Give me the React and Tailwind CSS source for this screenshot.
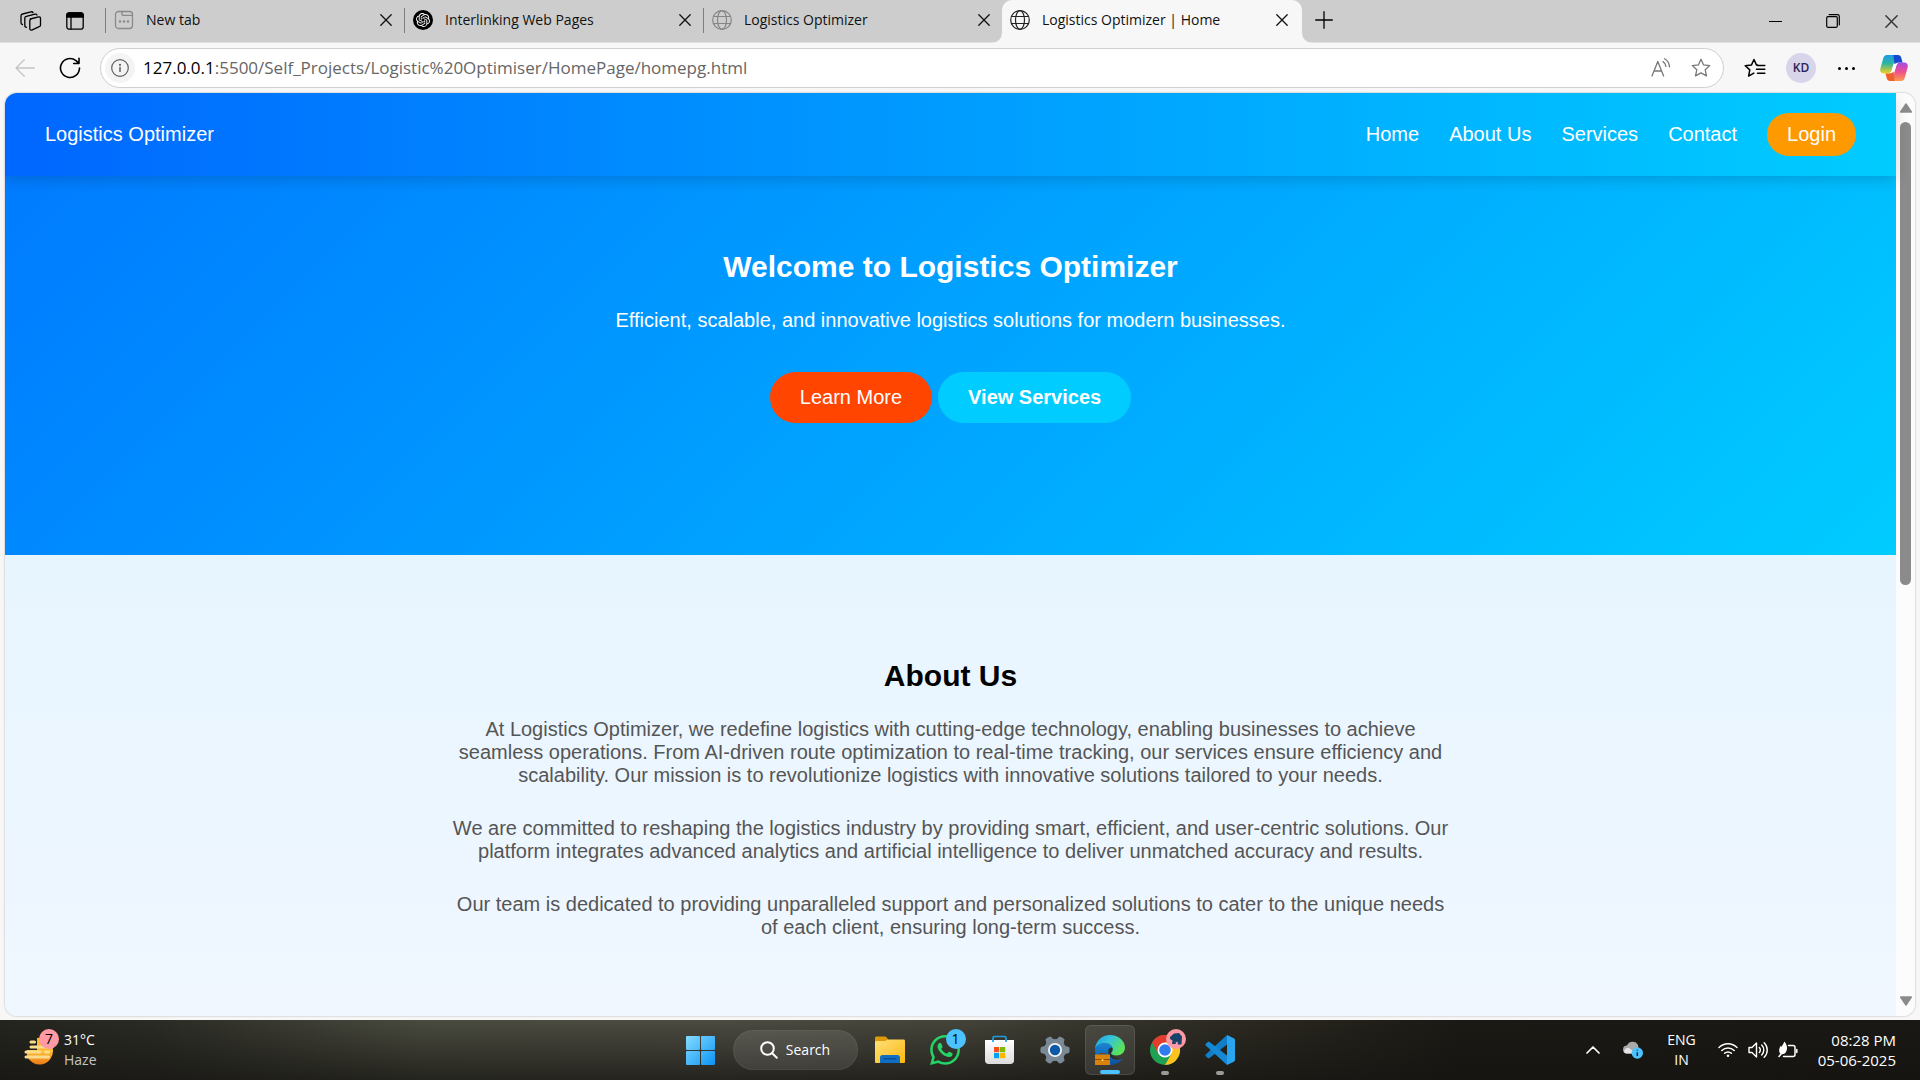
import React from "react";
import { SiOpenai, SiWhatsapp } from "react-icons/si";

const stroke = { fill: "none", stroke: "currentColor", strokeLinecap: "round", strokeLinejoin: "round" };

function Globe({ className }) {
  return (
    <svg viewBox="0 0 20 20" className={className} {...stroke} strokeWidth="1.2" aria-hidden="true">
      <circle cx="10" cy="10" r="9.3" />
      <ellipse cx="10" cy="10" rx="4.5" ry="9.3" />
      <path d="M1.6 6.5h16.8M1.6 13.5h16.8" />
    </svg>
  );
}

function NewTabIcon() {
  return (
    <svg viewBox="0 0 20 20" className="size-5 text-[#8a8a8a]" {...stroke} strokeWidth="1.3" aria-hidden="true">
      <rect x="1.5" y="1.5" width="17" height="17" rx="3" />
      <path d="M8 1.5v2.7c0 .7.5 1.2 1.2 1.2h9.3" />
      <g fill="currentColor" stroke="none">
        <circle cx="6" cy="11.5" r="1.2" />
        <circle cx="10" cy="11.5" r="1.2" />
        <circle cx="14" cy="11.5" r="1.2" />
      </g>
    </svg>
  );
}

function CloseIcon({ className = "size-3" }) {
  return (
    <svg viewBox="0 0 12 12" className={className} {...stroke} strokeWidth="1.3" aria-hidden="true">
      <path d="M.8.8l10.4 10.4M11.2.8L.8 11.2" />
    </svg>
  );
}

function Tab({ icon, title, active, divided }) {
  return (
    <div
      className={
        active
          ? "relative flex h-[43px] w-[300px] items-center rounded-t-[10px] bg-[#f7f7f7] pr-2.5 pb-1 pl-2"
          : "flex h-[42px] w-[299px] items-center pr-2 pb-0.5"
      }
    >
      {active && (
        <>
          <svg viewBox="0 0 10 10" className="absolute bottom-0 -left-2.5 size-2.5" fill="#f7f7f7" aria-hidden="true">
            <path d="M10 0v10H0A10 10 0 0 0 10 0z" />
          </svg>
          <svg viewBox="0 0 10 10" className="absolute -right-2.5 bottom-0 size-2.5" fill="#f7f7f7" aria-hidden="true">
            <path d="M0 0v10h10A10 10 0 0 1 0 0z" />
          </svg>
        </>
      )}
      {divided && <span className="mr-2 h-[25px] w-px bg-[#7d7d7d]" />}
      <button role="tab" aria-selected={!!active} className="flex flex-1 items-center gap-3 text-left text-sm text-[#111]">
        {icon}
        <span className="whitespace-nowrap">{title}</span>
      </button>
      <button aria-label={"Close " + title} className="flex size-5 items-center justify-center text-[#111]">
        <CloseIcon />
      </button>
    </div>
  );
}

function TabBar() {
  return (
    <div className="flex h-[42px] items-center bg-[#cdcdcd]">
      <button aria-label="Workspaces" className="ml-5 flex size-[22px] items-center justify-center">
        <svg viewBox="0 0 22 22" className="size-[22px]" {...stroke} strokeWidth="1.3" aria-hidden="true">
          <path d="M10.3 9l8.3-2.1c1-.2 1.9.4 1.9 1.4v6.6c0 .9-.5 1.5-1.3 1.8l-6.9 3.2c-1.3.6-2.5 0-2.5-1.3v-7.7c0-1 .5-1.7 1.3-1.9z" />
          <path d="M6.5 17.3c-1.2 0-1.7-.8-1.7-1.7V8.3c0-1 .5-1.8 1.5-2l8.7-2.1c.9-.2 1.6.1 2 .8" />
          <path d="M2.4 14.5C1.500 14.3 1 13.7 1 12.7V6c0-1 .5-1.8 1.5-2l8.5-2.2c.9-.2 1.6.1 2 .8" />
        </svg>
      </button>
      <button aria-label="Tab actions" className="ml-6 flex size-[18px] items-center justify-center">
        <svg viewBox="0 0 18 18" className="size-[18px]" {...stroke} strokeWidth="1.3" aria-hidden="true">
          <rect x=".8" y=".8" width="16.4" height="16.4" rx="2.5" />
          <path d="M.8 5V3.3A2.5 2.5 0 0 1 3.3.8h11.4a2.5 2.5 0 0 1 2.5 2.5V5z" fill="currentColor" />
          <path d="M5 5v12" />
        </svg>
      </button>
      <div role="tablist" className="ml-[21px] flex items-end self-stretch">
        <Tab divided title="New tab" icon={<NewTabIcon />} />
        <Tab
          divided
          title="Interlinking Web Pages"
          icon={
            <span className="flex size-5 items-center justify-center rounded-full bg-black text-white">
              <SiOpenai className="size-[14px]" />
            </span>
          }
        />
        <Tab divided title="Logistics Optimizer" icon={<Globe className="size-5 text-[#858585]" />} />
        <div className="-mb-px">
          <Tab active title="Logistics Optimizer | Home" icon={<Globe className="size-5 text-[#222]" />} />
        </div>
      </div>
      <button aria-label="New tab" className="ml-3 flex size-5 items-center justify-center pb-0.5">
        <svg viewBox="0 0 18 18" className="size-[18px]" {...stroke} strokeWidth="1.3" aria-hidden="true">
          <path d="M9 .7v16.6M.7 9h16.6" />
        </svg>
      </button>
      <div className="ml-auto flex self-stretch">
        <button aria-label="Minimize" className="flex w-[58px] items-center justify-center">
          <svg viewBox="0 0 13 13" className="size-[13px]" aria-hidden="true">
            <path d="M0 6.5h13" stroke="#000" />
          </svg>
        </button>
        <button aria-label="Restore" className="flex w-[58px] items-center justify-center">
          <svg viewBox="0 0 14 14" className="size-[14px]" {...stroke} strokeWidth="1.2" aria-hidden="true">
            <rect x=".7" y="2.7" width="10.6" height="10.6" rx="1.2" />
            <path d="M3.2.7h8.3c1 0 1.8.8 1.8 1.8v8.3" />
          </svg>
        </button>
        <button aria-label="Close window" className="flex w-[58px] items-center justify-center text-[#333]">
          <CloseIcon className="size-[13px]" />
        </button>
      </div>
    </div>
  );
}

function CopilotIcon() {
  return (
    <svg viewBox="0 0 28 26" className="h-[26px] w-7" aria-hidden="true">
      <defs>
        <linearGradient id="cpA" x1="0" y1="0" x2="0" y2="1">
          <stop offset="0" stopColor="#1e9bea" />
          <stop offset=".45" stopColor="#2bb5a0" />
          <stop offset="1" stopColor="#f5d21c" />
        </linearGradient>
        <linearGradient id="cpB" x1="0" y1="0" x2="0" y2="1">
          <stop offset="0" stopColor="#a44be8" />
          <stop offset=".5" stopColor="#f04f8c" />
          <stop offset="1" stopColor="#fd9a4c" />
        </linearGradient>
      </defs>
      <path d="M7 0h10.500c-1.600.6-2 2-2.600 4l-3 10.500c-.7 2.600-1.600 4-4 4H4c-3 0-4.400-2-3.600-5L3 4C3.700 1.400 4.800 0 7 0z" fill="url(#cpA)" />
      <path d="M21 26H10.500c1.600-.6 2-2 2.600-4l3-10.500c.7-2.600 1.600-4 4-4H24c3 0 4.400 2 3.600 5L25 22c-.7 2.600-1.800 4-4 4z" fill="url(#cpB)" />
      <path d="M13.500 0h4.500c1.700 0 2.700 1 3.200 2.500L22.500 7.500H19c-2.500 0-3.500 1-4.500 3.500z" fill="#1749cf" />
      <path d="M14.500 26H10c-1.700 0-2.700-1-3.200-2.500L5.500 18.500H9c2.500 0 3.500-1 4.500-3.500z" fill="#f0602a" />
      <path d="M15.500 8.500h2.300c-1.300 1-1.800 2.500-2.300 4.300-.8 3-1.500 4.700-4.500 5.200H9.500c1.500-.7 2.200-2 2.800-4.200.9-3.200 1.400-5 3.200-5.300z" fill="#fff" />
    </svg>
  );
}

const starPath = "M10 1.300l2.600 5.600 6.200.7-4.600 4.200 1.300 6.100L10 14.900l-5.500 3 1.300-6.100L1.200 7.600l6.200-.7z";

function Toolbar() {
  return (
    <div className="flex h-[51px] items-center border-t border-[#e2e2e2] bg-[#f7f7f7]">
      <button aria-label="Back" disabled className="ml-[15px] text-[#c4c4c4]">
        <svg viewBox="0 0 20 18" className="h-[18px] w-5" {...stroke} strokeWidth="1.3" aria-hidden="true">
          <path d="M9.300.8L1 9l8.300 8.200M1 9h18.300" />
        </svg>
      </button>
      <button aria-label="Refresh" className="ml-6">
        <svg viewBox="0 0 22 22" className="size-[22px]" {...stroke} strokeWidth="1.6" aria-hidden="true">
          <path d="M20.500 11A9.500 9.500 0 1 1 17 3.600l2.800 2.700M20 1.200v5.300h-5.300" />
        </svg>
      </button>
      <div className="ml-[19px] flex h-10 flex-1 items-center rounded-full border border-[#cfcfcf] bg-white pr-3 pl-1">
        <button aria-label="Site information" className="flex size-[30px] items-center justify-center rounded-full bg-[#f4f4f4] text-[#5f5f5f]">
          <svg viewBox="0 0 18 18" className="size-[18px]" {...stroke} strokeWidth="1.2" aria-hidden="true">
            <circle cx="9" cy="9" r="8.3" />
            <path d="M9 8.500v4" strokeWidth="1.5" />
            <circle cx="9" cy="5.8" r=".5" fill="currentColor" />
          </svg>
        </button>
        <div role="textbox" aria-label="Address" className="ml-2 flex-1 text-[17px] whitespace-nowrap text-[#666]">
          <span className="text-black">127.0.0.1</span>:5500/Self_Projects/Logistic%20Optimiser/HomePage/homepg.html
        </div>
        <button aria-label="Read aloud" className="text-[#777]">
          <svg viewBox="0 0 20 20" className="size-5" {...stroke} strokeWidth="1.3" aria-hidden="true">
            <path d="M1 18L6.800 3.500 12.600 18M3 13h7.600M12 3.600c1.600 1 2.700 2.700 2.900 4.800M13.600.8c2.700 1.500 4.600 4.400 4.900 8" />
          </svg>
        </button>
        <button aria-label="Add to favorites" className="ml-5 text-[#777]">
          <svg viewBox="0 0 20 20" className="size-5" {...stroke} strokeWidth="1.3" aria-hidden="true">
            <path d={starPath} />
          </svg>
        </button>
      </div>
      <button aria-label="Favorites" className="ml-5">
        <svg viewBox="0 0 22 20" className="h-5 w-[22px]" {...stroke} strokeWidth="1.5" aria-hidden="true">
          <path d="M13.600 6.900h-1.200L10 1.500 7.500 6.900l-6.300.8 4.600 4.200-1.200 6.200 5.200-3M13.500 7.500h7.300M12.500 11.300h8.300M13.500 15.200h7.300" />
        </svg>
      </button>
      <button aria-label="Profile" className="ml-5 flex size-[30px] items-center justify-center rounded-full bg-[#d8d4ea] text-xs font-semibold text-[#2b2357]">
        KD
      </button>
      <button aria-label="Settings and more" className="ml-5 flex w-5 items-center justify-center gap-1">
        <span className="size-[3px] rounded-full bg-black" />
        <span className="size-[3px] rounded-full bg-black" />
        <span className="size-[3px] rounded-full bg-black" />
      </button>
      <button aria-label="Copilot" className="mr-3 ml-6">
        <CopilotIcon />
      </button>
    </div>
  );
}

const paragraphs = [
  "At Logistics Optimizer, we redefine logistics with cutting-edge technology, enabling businesses to achieve seamless operations. From AI-driven route optimization to real-time tracking, our services ensure efficiency and scalability. Our mission is to revolutionize logistics with innovative solutions tailored to your needs.",
  "We are committed to reshaping the logistics industry by providing smart, efficient, and user-centric solutions. Our platform integrates advanced analytics and artificial intelligence to deliver unmatched accuracy and results.",
  "Our team is dedicated to providing unparalleled support and personalized solutions to cater to the unique needs of each client, ensuring long-term success.",
];

function Website() {
  return (
    <div className="flex flex-1 flex-col font-['Liberation_Sans',Arial,sans-serif] text-xl leading-[23px]">
      <header className="relative flex items-center justify-between bg-linear-to-r from-[#0066ff] to-[#00ccff] px-10 py-5 text-white shadow-[0_5px_12px_rgba(0,0,0,0.14)]">
        <a href="#home">Logistics Optimizer</a>
        <nav className="flex items-center gap-[30px]">
          <a href="#home">Home</a>
          <a href="#about">About Us</a>
          <a href="#services">Services</a>
          <a href="#contact">Contact</a>
          <a href="#login" className="rounded-full bg-[#ff9900] px-5 py-2.5">Login</a>
        </nav>
      </header>
      <section id="home" className="flex flex-col items-center bg-[linear-gradient(135deg,#007bff_0%,#00ccff_100%)] pt-[74px] pb-[132px] text-white">
        <h1 className="text-3xl leading-[34px] font-bold">Welcome to Logistics Optimizer</h1>
        <p className="mt-[25px]">Efficient, scalable, and innovative logistics solutions for modern businesses.</p>
        <div className="mt-10 flex gap-1.5">
          <button className="rounded-full bg-[#ff4500] px-[30px] py-[14px]">Learn More</button>
          <button className="rounded-full bg-[#00ccff] px-[30px] py-[14px] font-bold">View Services</button>
        </div>
      </section>
      <section id="about" className="flex flex-1 flex-col items-center bg-linear-to-b from-[#e7f5ff] to-[#f0f7ff] pt-[104px]">
        <h2 className="text-3xl leading-[34px] font-bold text-black">About Us</h2>
        <div className="mt-[25px] flex max-w-[1000px] flex-col gap-[30px] text-center text-[#555]">
          {paragraphs.map((p) => (
            <p key={p}>{p}</p>
          ))}
        </div>
      </section>
    </div>
  );
}

function ScrollArrow({ className }) {
  return (
    <svg viewBox="0 0 12 10" className={className} fill="currentColor" aria-hidden="true">
      <path d="M5.200.8a1 1 0 0 1 1.600 0l5 7.500c.5.800.1 1.500-.7 1.500H.9C.1 9.800-.3 9.100.2 8.300z" />
    </svg>
  );
}

function Scrollbar() {
  return (
    <div className="flex w-[19px] flex-col items-center bg-[#fcfcfc] py-2.5 text-[#8b8b8b]" aria-hidden="true">
      <ScrollArrow className="h-2.5 w-3" />
      <div className="flex w-full flex-1 flex-col items-center pt-[9px]">
        <div className="h-[53%] w-[11px] rounded-full bg-[#8b8b8b]" />
      </div>
      <ScrollArrow className="h-2.5 w-3 rotate-180" />
    </div>
  );
}

function WeatherIcon() {
  return (
    <svg viewBox="0 0 30 30" className="size-[30px]" aria-hidden="true">
      <defs>
        <linearGradient id="sun" x1="0" y1="0" x2="0" y2="1">
          <stop offset="0" stopColor="#ffc53a" />
          <stop offset="1" stopColor="#ec7a17" />
        </linearGradient>
      </defs>
      <path d="M3 15h26A13.500 13.500 0 0 1 3 21z" fill="url(#sun)" />
      <path d="M13 3a13.500 13.500 0 0 1 16 12H13z" fill="#ffb52e" />
      <g stroke="#f9dc8c" strokeWidth="3" strokeLinecap="round">
        <path d="M7 7h3.500M7 12h21M2 17h14M21.500 17h3M2 22h22.500" />
      </g>
    </svg>
  );
}

function StartIcon() {
  return (
    <svg viewBox="0 0 29 29" className="size-[29px]" aria-hidden="true">
      <defs>
        <linearGradient id="win" gradientUnits="userSpaceOnUse" x1="0" y1="0" x2="29" y2="29">
          <stop offset="0" stopColor="#86dcff" />
          <stop offset="1" stopColor="#0a94f5" />
        </linearGradient>
      </defs>
      <g fill="url(#win)">
        <rect width="14" height="14" rx="1" />
        <rect x="15" width="14" height="14" rx="1" />
        <rect y="15" width="14" height="14" rx="1" />
        <rect x="15" y="15" width="14" height="14" rx="1" />
      </g>
    </svg>
  );
}

function FolderIcon() {
  return (
    <svg viewBox="0 0 30 28" className="h-7 w-[30px]" aria-hidden="true">
      <defs>
        <linearGradient id="fold" x1="0" y1="0" x2="1" y2="1">
          <stop offset="0" stopColor="#ffe07a" />
          <stop offset="1" stopColor="#fbb90f" />
        </linearGradient>
      </defs>
      <path d="M0 2c0-1 .7-1.500 1.500-1.500h8.300c.7 0 1.200.3 1.700.8L13.500 4v8H0z" fill="#dd9a08" />
      <path d="M0 6.500c0-1 .6-1.500 1.500-1.500H10l3-1.500h15.500c1 0 1.500.6 1.500 1.500v21c0 .7-.6 1-1.300 1H1.300C.6 27 0 26.700 0 26z" fill="url(#fold)" />
      <path d="M5 27v-5.500c0-1.500 1-2.500 2.500-2.500h15c1.500 0 2.500 1 2.500 2.500V27z" fill="#0f6fc4" />
      <path d="M8.500 22.800h13" stroke="#0a3f78" strokeWidth="1" />
    </svg>
  );
}

function StoreIcon() {
  return (
    <svg viewBox="0 0 29 30" className="h-[30px] w-[29px]" aria-hidden="true">
      <defs>
        <linearGradient id="bag" x1="0" y1="0" x2="0" y2="1">
          <stop offset="0" stopColor="#ffffff" />
          <stop offset="1" stopColor="#dcdcdc" />
        </linearGradient>
      </defs>
      <path d="M0 5h29v20.500c0 2-1.500 3.500-3.500 3.500h-22C1.500 29 0 27.500 0 25.500z" fill="url(#bag)" />
      <path d="M8 7V3c0-1 .5-1.500 1.500-1.500h10c1 0 1.500.5 1.500 1.500v4" fill="none" stroke="#1ba0e0" strokeWidth="1.7" />
      <rect x="9" y="12" width="5.2" height="5.2" fill="#f25022" />
      <rect x="15" y="12" width="5.2" height="5.2" fill="#7fba00" />
      <rect x="9" y="18" width="5.2" height="5.2" fill="#00a4ef" />
      <rect x="15" y="18" width="5.2" height="5.2" fill="#ffb900" />
    </svg>
  );
}

function GearIcon() {
  return (
    <svg viewBox="0 0 30 30" className="size-[30px]" aria-hidden="true">
      <g fill="#7b8896">
        <circle cx="15" cy="15" r="11" />
        {[30, 90, 150, 210, 270, 330].map((a) => (
          <path key={a} d="M10.500 6.500l1.500-5.500q3-1.300 6 0l1.500 5.500z" transform={`rotate(${a} 15 15)`} />
        ))}
      </g>
      <circle cx="15" cy="15" r="7" fill="#f2f4f6" />
      <circle cx="15" cy="15" r="5.2" fill="#0c59a8" />
    </svg>
  );
}

function EdgeIcon() {
  return (
    <svg viewBox="0 0 30 30" className="size-[30px]" aria-hidden="true">
      <defs>
        <linearGradient id="edA" x1="0" y1="0" x2="1" y2=".5">
          <stop offset="0" stopColor="#1d9ee8" />
          <stop offset=".5" stopColor="#36c5d8" />
          <stop offset="1" stopColor="#5be256" />
        </linearGradient>
        <linearGradient id="edB" x1="0" y1="0" x2="0" y2="1">
          <stop offset="0" stopColor="#1a86d8" />
          <stop offset="1" stopColor="#0d4f9e" />
        </linearGradient>
      </defs>
      <path d="M0 15c0-4 4-7 9-7 6 0 9.500 3 9 7-1 2-2 3-2 5 0 4 5 7 11.500 3C25 27.500 20 30 15 30 6 30 0 23 0 15z" fill="url(#edB)" />
      <path d="M14.500 13c-1.500 2-1.500 4-1 6 .8 3 4 5 7.500 5 2.500 0 4.500-.6 6.500-1.600-6 2.600-9.500-.4-9.500-2.900 0-1.500 1-2.500 1-4.500 0-1-.8-2-2-2.500z" fill="#26302f" />
      <path d="M0 14C.5 6 7 0 15 0c8.500 0 15 6 15 12.500 0 5-4 8-8.500 8-3.500 0-5.500-1.200-5.500-2.200 0-.8 1.800-1.500 1.800-4C17.800 11 14.500 8 9.500 8 5 8 1 10.500 0 14z" fill="url(#edA)" />
      <rect x="0" y="19.500" width="15" height="10.5" fill="#d9820c" />
      <path d="M0 24.500h15" stroke="#8c4a05" strokeWidth="1" />
      <path d="M4.500 19.500v-1h6v1" fill="none" stroke="#7a4207" />
      <circle cx="7.5" cy="25" r="1" fill="#ffe45c" />
    </svg>
  );
}

function ChromeIcon() {
  return (
    <svg viewBox="0 0 30 30" className="size-[30px]" aria-hidden="true">
      <circle cx="15" cy="15" r="15" fill="#1fa052" />
      <path d="M2 7.500A15 15 0 0 1 28 7.500H15L8.500 18.800z" fill="#e33b2e" />
      <path d="M28 7.500A15 15 0 0 1 15 30l6.500-11.200L15 7.500z" fill="#fcc31e" />
      <circle cx="15" cy="15" r="7.5" fill="#fff" />
      <circle cx="15" cy="15" r="5.8" fill="#2f7cf0" />
    </svg>
  );
}

function VsCodeIcon() {
  return (
    <svg viewBox="0 0 30 30" className="size-[30px]" aria-hidden="true">
      <path d="M22 0L1 19.200c-.8.7-.8 1.500 0 2.200l1.600 1.400c.6.500 1.300.5 1.900.1L22 9.500z" fill="#0f7fc9" />
      <path d="M22 30L1 10.800c-.8-.7-.8-1.500 0-2.200l1.600-1.400c.6-.5 1.300-.5 1.900-.1L22 20.500z" fill="#1589d6" />
      <path d="M22 0l6.800 3.200c.8.400 1.200 1 1.200 1.800v20c0 .8-.4 1.400-1.200 1.800L22 30z" fill="#2ba4f0" />
    </svg>
  );
}

function Badge({ className, children }) {
  return (
    <span className={"absolute flex size-5 items-center justify-center rounded-full text-sm leading-5 text-black " + className}>
      {children}
    </span>
  );
}

function TaskbarApp({ label, active, running, children }) {
  return (
    <button
      aria-label={label}
      className={
        active
          ? "relative flex h-[50px] w-[50px] items-center justify-center rounded-md border border-white/10 bg-white/10"
          : "relative flex h-[50px] w-[50px] items-center justify-center"
      }
    >
      {children}
      {active && <span className="absolute bottom-0 h-1 w-5 rounded-full bg-[#4cc2ff]" />}
      {running && <span className="absolute bottom-0 h-1 w-2 rounded-full bg-[#9a9a9a]" />}
    </button>
  );
}

function Taskbar() {
  return (
    <footer className="grid h-[60px] grid-cols-[1fr_auto_1fr] items-center bg-[linear-gradient(to_bottom,rgba(20,19,16,0)_0%,rgba(20,19,16,0.7)_100%),linear-gradient(to_right,#25251f_0%,#2b2b25_8%,#4a4b3f_22%,#4c4b42_38%,#45443a_50%,#35342b_58%,#29271f_66%,#1b1914_76%,#1a1814_100%)] text-sm text-white">
      <button className="flex items-center gap-2.5 justify-self-start pl-6 text-left leading-5">
        <span className="relative">
          <WeatherIcon />
          <Badge className="-top-1.5 left-[15px] bg-[#ff9aa5]">7</Badge>
        </span>
        <span>
          <span className="block">31°C</span>
          <span className="block text-[#c4c4c4]">Haze</span>
        </span>
      </button>
      <div className="flex items-center gap-[5px]">
        <TaskbarApp label="Start">
          <StartIcon />
        </TaskbarApp>
        <button className="mx-0.5 flex h-10 w-[125px] items-center justify-center gap-2 rounded-full border border-white/5 bg-white/10">
          <svg viewBox="0 0 18 18" className="size-[18px]" {...stroke} strokeWidth="2" aria-hidden="true">
            <circle cx="7.5" cy="7.5" r="6.3" />
            <path d="M12.200 12.200l4.600 4.600" />
          </svg>
          Search
        </button>
        <TaskbarApp label="File Explorer">
          <FolderIcon />
        </TaskbarApp>
        <TaskbarApp label="WhatsApp">
          <SiWhatsapp className="size-[30px] text-[#25d366]" />
          <Badge className="top-1 right-1 bg-[#4cc2ff]">1</Badge>
        </TaskbarApp>
        <TaskbarApp label="Microsoft Store">
          <StoreIcon />
        </TaskbarApp>
        <TaskbarApp label="Settings">
          <GearIcon />
        </TaskbarApp>
        <TaskbarApp label="Microsoft Edge" active>
          <EdgeIcon />
        </TaskbarApp>
        <TaskbarApp label="Google Chrome" running>
          <ChromeIcon />
          <Badge className="top-1 right-1 bg-[#ff9aa5]">
            <svg viewBox="0 0 14 14" className="size-[14px]" aria-hidden="true">
              <path d="M1 5l4-3.500 5-.5 3 3.500-.5 8H9l-.5-3-2 1 .5 1.500H3l.5-3.500L1 7z" fill="#17436b" />
            </svg>
          </Badge>
        </TaskbarApp>
        <TaskbarApp label="Visual Studio Code" running>
          <VsCodeIcon />
        </TaskbarApp>
      </div>
      <div className="flex items-center justify-self-end pr-6">
        <button aria-label="Show hidden icons">
          <svg viewBox="0 0 14 8" className="h-2 w-[14px]" {...stroke} strokeWidth="1.7" aria-hidden="true">
            <path d="M1 7l6-6 6 6" />
          </svg>
        </button>
        <button aria-label="OneDrive" className="ml-[23px]">
          <svg viewBox="0 0 20 18" className="h-[18px] w-5" aria-hidden="true">
            <path d="M4 12.500a4 4 0 0 1 0-8A6 6 0 0 1 15 4l1.500 8.500z" fill="#a9a9a9" />
            <path d="M1 11a4 4 0 0 1 5-4l7 5.500H4A3.500 3.500 0 0 1 1 11z" fill="#e4e4e4" />
            <circle cx="14.3" cy="12" r="5.7" fill="#4cc2ff" />
            <path d="M14.300 11.300v3.700M14.300 8.800v.8" stroke="#0b2b45" strokeWidth="1.5" />
          </svg>
        </button>
        <button aria-label="Input language" className="ml-6 text-center leading-5">
          <span className="block">ENG</span>
          <span className="block">IN</span>
        </button>
        <button aria-label="Network, volume and battery" className="ml-[22px] flex items-center gap-2.5">
          <svg viewBox="0 0 20 16" className="h-4 w-5" {...stroke} strokeWidth="1.5" aria-hidden="true">
            <path d="M1 5.500a12.700 12.700 0 0 1 18 0M3.800 8.500a8.800 8.800 0 0 1 12.400 0M6.600 11.300a4.800 4.800 0 0 1 6.800 0" />
            <circle cx="10" cy="13.7" r="1.3" fill="currentColor" stroke="none" />
          </svg>
          <svg viewBox="0 0 20 18" className="h-[18px] w-5" {...stroke} strokeWidth="1.4" aria-hidden="true">
            <path d="M1 6.500h3L8.500 2v14L4 11.500H1zM11.300 6.500a3.500 3.500 0 0 1 0 5M13.700 4a7 7 0 0 1 0 10M16.200 1.700a10.300 10.300 0 0 1 0 14.600" />
          </svg>
          <svg viewBox="0 0 20 18" className="h-[18px] w-5" {...stroke} strokeWidth="1.5" aria-hidden="true">
            <path d="M10.500 4.500H15c1.200 0 2 .8 2 2v7c0 1.200-.8 2-2 2H5.500M18.800 8.500v3" />
            <path d="M6.500.5c3 4 3.500 8 .8 11.500-1.500 1.500-4 1.500-5.300.5C.5 10 1 7 3 4.500l.5 1.500z" fill="currentColor" stroke="none" />
            <path d="M1 15.500l3-3.500" />
          </svg>
        </button>
        <button aria-label="Date and time" className="ml-5 text-right text-[15px] leading-5">
          <span className="block">08:28 PM</span>
          <span className="block">05-06-2025</span>
        </button>
      </div>
    </footer>
  );
}

export default function App() {
  return (
    <div className="flex h-screen flex-col overflow-hidden bg-[#f7f7f7] font-['Open_Sans','Noto_Sans',sans-serif] text-black">
      <TabBar />
      <Toolbar />
      <main className="mx-[5px] mb-1 flex min-h-0 flex-1 overflow-hidden rounded-xl shadow-[0_0_2px_rgba(0,0,0,0.35)]">
        <Website />
        <Scrollbar />
      </main>
      <Taskbar />
    </div>
  );
}
